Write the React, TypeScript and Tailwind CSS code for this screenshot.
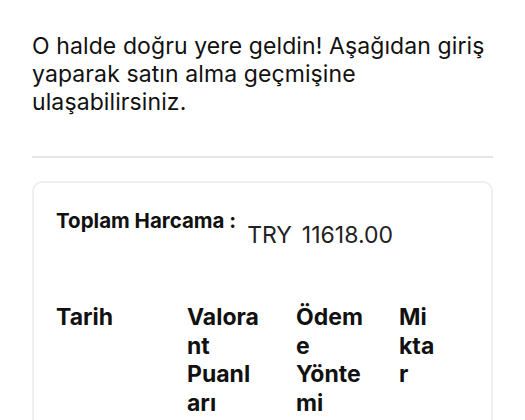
export default function App() {
  const headers = [
    { label: "Tarih", cell: "w-[131px]", text: "w-[90px]" },
    { label: "Valorant Puanları", cell: "w-[109px]", text: "w-[76px]" },
    { label: "Ödeme Yöntemi", cell: "w-[103px]", text: "w-[72px]" },
    { label: "Miktar", cell: "w-[60px]", text: "w-[36px]" },
  ];

  return (
    <div className="min-h-screen bg-white px-8 pt-8 text-[#111] font-['Inter',sans-serif]">
      <p className="text-[23px] leading-[28px] tracking-[0.1px]">
        O halde doğru yere geldin! Aşağıdan giriş yaparak satın alma geçmişine ulaşabilirsiniz.
      </p>

      <div className="mt-10 border-t-2 border-[#e6e6e6]" />

      <div className="mt-[23px] rounded-[10px] border-2 border-[#efefef] px-[22px] pt-6 pb-8">
        <div className="flex items-start gap-[11px]">
          <h3 className="text-[20.5px] font-bold leading-[28px]">Toplam Harcama :</h3>
          <div className="mt-[14px] flex gap-[10px] text-[23px] leading-[28px] text-[#222]">
            <span>TRY</span>
            <span>11618.00</span>
          </div>
        </div>

        <div className="mt-[54px] flex items-start">
          {headers.map((h) => (
            <div key={h.label} className={`${h.cell} shrink-0`}>
              <div className={`${h.text} [overflow-wrap:anywhere] text-[23px] font-bold leading-[28.5px]`}>
                {h.label}
              </div>
            </div>
          ))}
        </div>
      </div>
    </div>
  );
}
